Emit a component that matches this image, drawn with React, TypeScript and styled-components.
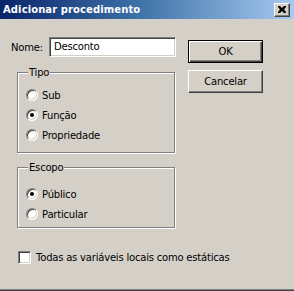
import { FC } from 'react';
import styled, { createGlobalStyle } from 'styled-components';

const GlobalStyle = createGlobalStyle`
  html, body {
    margin: 0;
    padding: 0;
    background: #d4d0c8;
  }
  * {
    box-sizing: border-box;
  }
`;

const Dialog = styled.div`
  width: 294px;
  height: 291px;
  display: flex;
  flex-direction: column;
  background: #d4d0c8;
  font-family: 'DejaVu Sans', 'Liberation Sans', sans-serif;
  font-size: 10px;
  letter-spacing: -0.2px;
  color: #000;
  border-bottom: 1px solid #404040;
  box-shadow: inset 0 -1px 0 #808080;
`;

const TitleBar = styled.div`
  height: 19px;
  display: flex;
  align-items: center;
  justify-content: space-between;
  padding: 0 3px 0 3px;
  background: linear-gradient(to right, #0a246a 0%, #3a6ea5 45%, #a6caf0 100%);
`;

const Title = styled.span`
  color: #fff;
  font-weight: bold;
  font-size: 10px;
  letter-spacing: 0.1px;
`;

const CloseButton = styled.div`
  width: 16px;
  height: 14px;
  margin-right: 1px;
  background: #d4d0c8;
  border-top: 1px solid #fff;
  border-left: 1px solid #fff;
  border-right: 1px solid #404040;
  border-bottom: 1px solid #404040;
  box-shadow: inset -1px -1px 0 #808080;
  display: flex;
  align-items: center;
  justify-content: center;
`;

const Body = styled.div`
  flex: 1;
  display: flex;
  flex-direction: column;
  padding: 18px 0 0 11px;
`;

const Top = styled.div`
  display: flex;
`;

const LeftColumn = styled.div`
  width: 165px;
  display: flex;
  flex-direction: column;
`;

const RightColumn = styled.div`
  margin-left: 12px;
  padding-top: 3px;
  display: flex;
  flex-direction: column;
  gap: 7px;
`;

const NameRow = styled.div`
  display: flex;
  align-items: center;
  height: 20px;
`;

const Label = styled.label`
  width: 38px;
`;

const TextBox = styled.div`
  width: 127px;
  height: 20px;
  background: #fff;
  border-top: 1px solid #808080;
  border-left: 1px solid #808080;
  border-right: 1px solid #fff;
  border-bottom: 1px solid #fff;
  box-shadow: inset 1px 1px 0 #404040, inset -1px -1px 0 #d4d0c8;
  padding: 3px 0 0 4px;
`;

const Group = styled.fieldset<{ $top: number; $height: number; $inset: number }>`
  margin: ${(p) => p.$top}px 0 0 6px;
  width: 158px;
  height: ${(p) => p.$height}px;
  padding: ${(p) => p.$inset}px 0 0 8px;
  border: 1px solid #808080;
  box-shadow: 1px 1px 0 #fff, inset 1px 1px 0 #fff;
  display: flex;
  flex-direction: column;
`;

const Legend = styled.legend`
  margin-left: 2px;
  padding: 0 1px;
  background: #d4d0c8;
  line-height: 13px;
`;

const OptionRow = styled.div`
  display: flex;
  align-items: center;
  height: 20px;
  gap: 4px;
`;

const Radio = styled.span<{ $checked?: boolean }>`
  width: 12px;
  height: 12px;
  border-radius: 50%;
  background: #fff;
  border: 1px solid;
  border-color: #808080 #fff #fff #808080;
  box-shadow: inset 1px 1px 0 #404040, inset -1px -1px 0 #d4d0c8;
  display: flex;
  align-items: center;
  justify-content: center;

  &::after {
    content: '';
    width: 4px;
    height: 4px;
    border-radius: 50%;
    background: ${(p) => (p.$checked ? '#000' : 'transparent')};
  }
`;

const CheckRow = styled.div`
  margin: 23px 0 0 7px;
  display: flex;
  align-items: center;
  gap: 5px;
`;

const CheckBox = styled.span`
  width: 13px;
  height: 13px;
  background: #fff;
  border-top: 1px solid #808080;
  border-left: 1px solid #808080;
  border-right: 1px solid #fff;
  border-bottom: 1px solid #fff;
  box-shadow: inset 1px 1px 0 #404040, inset -1px -1px 0 #d4d0c8;
`;

const Button = styled.div<{ $default?: boolean }>`
  width: 75px;
  height: 23px;
  display: flex;
  align-items: center;
  justify-content: center;
  background: #d4d0c8;
  border: 1px solid;
  border-color: ${(p) => (p.$default ? '#000' : '#fff #404040 #404040 #fff')};
  box-shadow: ${(p) =>
    p.$default
      ? 'inset 1px 1px 0 #fff, inset -1px -1px 0 #404040, inset -2px -2px 0 #808080'
      : 'inset -1px -1px 0 #808080'};
`;

const options = {
  tipo: [
    { label: 'Sub', checked: false },
    { label: 'Função', checked: true },
    { label: 'Propriedade', checked: false },
  ],
  escopo: [
    { label: 'Público', checked: true },
    { label: 'Particular', checked: false },
  ],
};

const App: FC = () => {
  return (
    <>
      <GlobalStyle />
      <Dialog>
        <TitleBar>
          <Title>Adicionar procedimento</Title>
          <CloseButton>
            <svg width="8" height="7" viewBox="0 0 8 7">
              <path
                d="M0 0h2l2 2 2-2h2v1L6 3.5 8 6v1H6L4 5 2 7H0V6l2-2.5L0 1z"
                fill="#000"
              />
            </svg>
          </CloseButton>
        </TitleBar>
        <Body>
          <Top>
            <LeftColumn>
              <NameRow>
                <Label>Nome:</Label>
                <TextBox>Desconto</TextBox>
              </NameRow>
              <Group $top={9} $height={87} $inset={6}>
                <Legend>Tipo</Legend>
                {options.tipo.map((o) => (
                  <OptionRow key={o.label}>
                    <Radio $checked={o.checked} />
                    {o.label}
                  </OptionRow>
                ))}
              </Group>
              <Group $top={8} $height={67} $inset={10}>
                <Legend>Escopo</Legend>
                {options.escopo.map((o) => (
                  <OptionRow key={o.label}>
                    <Radio $checked={o.checked} />
                    {o.label}
                  </OptionRow>
                ))}
              </Group>
            </LeftColumn>
            <RightColumn>
              <Button $default>OK</Button>
              <Button>Cancelar</Button>
            </RightColumn>
          </Top>
          <CheckRow>
            <CheckBox />
            Todas as variáveis locais como estáticas
          </CheckRow>
        </Body>
      </Dialog>
    </>
  );
};

export default App;
